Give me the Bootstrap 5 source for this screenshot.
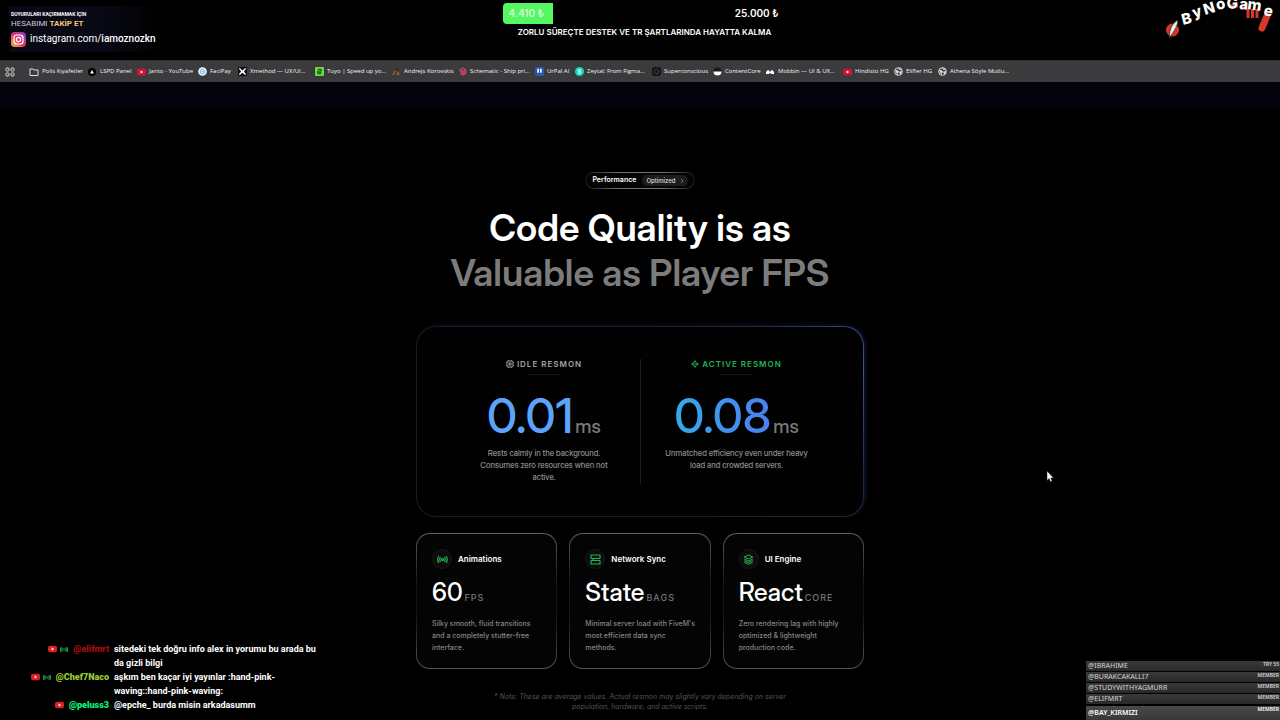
<!DOCTYPE html>
<html lang="tr" data-bs-theme="dark">
<head>
<meta charset="utf-8">
<meta name="viewport" content="width=device-width, initial-scale=1">
<title>Performance</title>
<link href="https://cdn.jsdelivr.net/npm/bootstrap@5.3.0/dist/css/bootstrap.min.css" rel="stylesheet">
<style>
body{background:#000;color:#fff;font-family:Inter,"Liberation Sans",sans-serif;min-height:100vh;overflow-x:hidden}
a{color:inherit;text-decoration:none}
svg{display:block;flex:none}
.stream-head{display:grid;grid-template-columns:1fr 284px 1fr;height:60px;padding-left:9px}
.promo{font-family:Roboto,sans-serif;width:152px;margin-top:6px;height:46px;padding:4px 0 0 2px;background:linear-gradient(90deg,#090916 60%,#000)}
.promo-top{font-size:5px;line-height:8px;font-weight:700}
.promo-mid{font-size:8px;line-height:11px;color:#c9c9d2}
.promo-mid b{color:#f5c56b}
.promo-link{font-size:10px;line-height:16px;margin-top:2px}
.promo-link b{font-weight:500}
.goal-row{height:21px;margin-top:3px;font-size:10px;font-weight:600}
.goal-fill{background:#55f763;border-radius:4px 0 0 4px;width:50px;padding-left:6px;color:#d5ffd8}
.goal-cap{font-size:8px;line-height:16px;font-weight:600;text-align:center;white-space:nowrap}
.bookmarks{display:grid;grid-template-columns:29px 58px 50px 61px 40px 77px 76px 68px 76px 40px 77px 61px 52px 78px 51px 44px 1fr;height:22px;background:#3b3b3e;border-top:1px solid #303033;align-items:center;font-family:"Open Sans",sans-serif;font-weight:500;font-size:6px;color:#f4f4f6;white-space:nowrap}
.bookmarks a{display:flex;align-items:center;gap:3px}
.apps-link{padding-left:5px}
.strip{height:26px;background:#04020c}
.perf{max-width:448px;padding-top:64px}
.pill{height:17px;border:1px solid transparent;border-radius:9px;background:linear-gradient(#050505,#050505) padding-box,linear-gradient(90deg,#1a1a1a,#707070 30%,#707070 70%,#1a1a1a) border-box;font-size:7px;font-weight:600;padding:0 6px;gap:6px}
.pill-in{background:#1c1c1e;border-radius:6px;height:11px;padding:0 4px;font-size:6px;font-weight:500;color:#ddd;gap:4px}
.headline,.figure-num,.unit,.desc,.value{font-family:"Inter Display",Inter,sans-serif}
.headline{font-size:37px;line-height:45px;font-weight:600;margin:16px 0 31px;white-space:nowrap}
.headline span{color:#7c7c7c}
.panel{border:1px solid transparent;border-radius:20px;padding:32px 31px;background:linear-gradient(#010102,#010102) padding-box,radial-gradient(circle at 100% 22%,#41558e,#222a44 22%,#1c1c1e 48%) border-box;box-shadow:2px -1px 4px -1px #101b3d}
.half{min-height:125px;text-align:center}
.half + .half{border-left:1px solid #1d1d1d}
.tag-line{font-size:8px;line-height:10px;font-weight:600;letter-spacing:1px;color:#a2a2a2;gap:3px}
.tag-line.live{color:#22b455}
.dash{width:32px;height:1px;background:#171717;margin:5px auto 16px}
.figure-num{font-size:48px;line-height:50px;font-weight:500;color:#5ca3fa}
.figure-num.grad{background:linear-gradient(90deg,#35a9ea,#4b7ff0);-webkit-background-clip:text;background-clip:text;color:transparent}
.unit{font-size:19px;line-height:24px;font-weight:500;color:#7a7a7a}
.figure{gap:2px}
.desc{font-size:8px;line-height:12px;color:#8c8c8c;font-weight:500;width:152px;margin:6px auto 0}
.tiles{display:grid;grid-template-columns:repeat(3,1fr);gap:12px;margin-top:16px}
.tile{border:1px solid transparent;border-radius:14px;padding:15px 14px 14px 15px;min-height:135px;background:linear-gradient(#040404,#040404) padding-box,linear-gradient(#5e5e5e,#151515 38%,#151515 62%,#555) border-box}
.tile h2{font-size:8px;line-height:20px;font-weight:600;margin:0}
.tile-head{gap:6px}
.disc{width:20px;height:20px;border-radius:50%;background:#0d0d0d;border:1px solid #171717;color:#22b455;display:flex;align-items:center;justify-content:center}
.value{font-size:25px;line-height:30px;font-weight:500;margin-top:8px;white-space:nowrap}
.value small{font-family:Inter,sans-serif;font-size:9px;letter-spacing:1px;color:#777;margin-left:2px}
.tile p{font-size:7px;line-height:12px;font-weight:500;color:#858585;margin:5px 0 0}
.note{font-size:7px;line-height:10px;font-style:italic;color:#555;text-align:center;width:300px;margin:23px auto 0}
.chat{position:absolute;left:0;bottom:8px;width:320px;font-family:Roboto,sans-serif;font-weight:700;font-size:9px;line-height:14px}
.chat-row{display:grid;grid-template-columns:109px 1fr;column-gap:5px}
.who{display:flex;justify-content:flex-end;align-items:center;gap:3px;height:14px}
.who b{margin-left:2px}
.members{position:absolute;right:0;bottom:0;width:194px;font-family:"Noto Sans",sans-serif;font-size:7px;color:#d5d5d5}
.members li{height:10px;margin-bottom:1px;padding:0 1px 0 2px;background:linear-gradient(#3a3a3a,#292929);display:flex;justify-content:space-between;line-height:10px}
.members small{font-size:5px;line-height:7px;font-weight:600}
.members li:last-child{height:14px;margin:2px 0 0;background:linear-gradient(#494949,#383838);line-height:14px;font-weight:600;color:#fff}
.pointer{position:absolute;left:1046px;top:470px}
</style>
</head>
<body class="position-relative">
<svg width="0" height="0" class="position-absolute">
<defs>
<symbol id="yt" viewBox="0 0 10 8"><rect y=".5" width="10" height="7" rx="2" fill="currentColor"/><path d="M4 2.4v3.2L6.8 4z" fill="#fff"/></symbol>
<symbol id="globe" viewBox="0 0 10 10"><circle cx="5" cy="5" r="4.3" fill="#3b3b3e" stroke="#ddd" stroke-width="1.1"/><path d="M1.2 3.5 4 4l1.4 1.6L4 6.4 3.8 8.8M5 1l.6 1.7L8.6 3M6 5.3l2.8-.2-1.6 3z" fill="#ddd" stroke="#ddd" stroke-width=".7"/></symbol>
<symbol id="wave" viewBox="0 0 10 8"><circle cx="5" cy="4" r="1.2" fill="none" stroke="currentColor"/><path d="M3 1.4Q1.4 4 3 6.6M7 1.4Q8.6 4 7 6.6M1.5.8Q-.4 4 1.5 7.2M8.5.8Q10.4 4 8.5 7.2" fill="none" stroke="currentColor" stroke-width="1.3"/></symbol>
</defs></svg>

<header class="stream-head">
  <div class="promo">
    <div class="promo-top">DUYURULARI KAÇIRMAMAK İÇİN</div>
    <div class="promo-mid">HESABIMI <b>TAKİP ET</b></div>
    <a href="#" class="promo-link d-flex align-items-center gap-1">
      <svg width="15" height="15" viewBox="0 0 15 15"><defs><linearGradient id="ig" x1="0" y1="1" x2="1" y2="0"><stop offset="0" stop-color="#fbbf45"/><stop offset=".45" stop-color="#e8385f"/><stop offset="1" stop-color="#7a35d8"/></linearGradient></defs><rect width="15" height="15" rx="4" fill="url(#ig)"/><rect x="3" y="3" width="9" height="9" rx="2.7" fill="none" stroke="#fff" stroke-width="1.2"/><circle cx="7.5" cy="7.5" r="2.1" fill="none" stroke="#fff" stroke-width="1.2"/><circle cx="10.2" cy="4.8" r=".6" fill="#fff"/></svg>
      <span>instagram.com/<b>iamoznozkn</b></span></a>
  </div>
  <div>
    <div class="goal-row d-flex justify-content-between align-items-center">
      <div class="goal-fill h-100 d-flex align-items-center">4.410 ₺</div><div class="pe-2">25.000 ₺</div>
    </div>
    <div class="goal-cap">ZORLU SÜREÇTE DESTEK VE TR ŞARTLARINDA HAYATTA KALMA</div>
  </div>
  <div class="d-flex justify-content-end">
    <svg width="120" height="44" viewBox="0 0 120 44" role="img" aria-label="ByNoGame">
      <circle cx="12.5" cy="30" r="6.5" fill="#d5382b"/><path d="M9 38 10 31Q12 23 18 20 18 27 9 38Z" fill="#e9eef0" stroke="#111" stroke-width=".6"/>
      <path d="M69 6h9M80 8h7M88 9v9M92.5 9v9M97 9v9" stroke="#d5382b" stroke-width="3" fill="none"/><path d="M107 16 102 28" stroke="#d5382b" stroke-width="7" stroke-linecap="round"/>
      <text x="23 34 45 57 67 79 87 103" y="25 18 15 10 9 9 9 15" rotate="-14 -18 -16 -12 -4 4 8 12" font-family="Inter,sans-serif" font-weight="800" font-size="15" fill="#fff">ByNoGame</text>
    </svg>
  </div>
</header>

<nav class="bookmarks" aria-label="Bookmarks">
  <a href="#" class="apps-link" aria-label="Apps"><svg width="10" height="10" viewBox="0 0 10 10" fill="none" stroke="#ddd"><rect x="1" y="1" width="3" height="3" rx=".8"/><rect x="6" y="1" width="3" height="3" rx=".8"/><rect x="1" y="6" width="3" height="3" rx=".8"/><rect x="6" y="6" width="3" height="3" rx=".8"/></svg></a>
  <a href="#"><svg width="10" height="10" viewBox="0 0 10 10"><path d="M1 2h3l1 1h4v5.500H1z" fill="none" stroke="#ddd"/></svg>Polis Kıyafetler</a>
  <a href="#"><svg width="10" height="10" viewBox="0 0 10 10"><circle cx="5" cy="5" r="4" fill="#000"/><path d="M5 3 7 6.500H3z" fill="#fff"/></svg>LSPD Panel</a>
  <a href="#"><svg width="9" height="8" color="#d90f35"><use href="#yt"/></svg>Janto - YouTube</a>
  <a href="#"><svg width="9" height="9" viewBox="0 0 10 10"><circle cx="5" cy="5" r="4.800" fill="#e8f6fa"/><circle cx="5" cy="5" r="2.500" fill="none" stroke="#57b5d8"/><path d="M3.500 5.200h3" stroke="#57b5d8"/></svg>FaciPay</a>
  <a href="#"><svg width="9" height="9" viewBox="0 0 10 10"><rect width="10" height="10" fill="#111"/><path d="m2 1 3 3 3-3 1 1-2.500 3L9 8 8 9 5 6.500 2 9 1 8l2.500-3L1 2z" fill="#fff"/></svg>Xmethod — UX/UI...</a>
  <a href="#"><svg width="9" height="9" viewBox="0 0 10 10"><rect width="10" height="10" rx="1.500" fill="#69dd3d"/><path d="M3 2.500h4v2H3v3h4M7 6H4" fill="none" stroke="#164b16" stroke-width="1.100"/></svg>Tuyo | Speed up yo...</a>
  <a href="#"><svg width="10" height="10" viewBox="0 0 10 10"><path d="m1 8 3-5 1 1-2 4zM5 8l2-4 2 4z" fill="#a35331"/><circle cx="6" cy="2.500" r="1" fill="#36211b"/></svg>Andrejs Korovskis</a>
  <a href="#"><svg width="8" height="9" viewBox="0 0 8 10"><path d="M4 1 7 3 4 5 1 3zM1 3v2l3 2 3-2v2L4 9 1 7" fill="none" stroke="#c84561" stroke-width="1.400"/></svg>Schematic - Ship pri...</a>
  <a href="#"><svg width="9" height="9" viewBox="0 0 10 10"><rect width="10" height="10" rx="2" fill="#285ab2"/><path d="M3.500 2v4.500M6.500 2v4.500" stroke="#fff" stroke-width="1.800"/></svg>UrPal AI</a>
  <a href="#"><svg width="9" height="9" viewBox="0 0 10 10"><circle cx="5" cy="5" r="5" fill="#12d8bd"/><path d="M7 3.300Q3 2 3.300 4.400L6.700 5.600Q7 8 3 6.800" fill="none" stroke="#fff" stroke-width="1.100"/></svg>Zeytal: From Figma...</a>
  <a href="#"><svg width="9" height="9" viewBox="0 0 10 10"><rect width="10" height="10" rx="3" fill="#151515"/><circle cx="5" cy="5" r="2.500" fill="none" stroke="#777" stroke-dasharray="1 .7"/></svg>Superconscious</a>
  <a href="#"><svg width="9" height="9" viewBox="0 0 10 10"><circle cx="5" cy="5" r="4.500" fill="#191919"/><path d="M.5 5h9a4.500 4.500 0 0 1-9 0" fill="#fff"/></svg>ContentCore</a>
  <a href="#"><svg width="10" height="8" viewBox="0 0 10 8"><path d="M1 6V4.500Q1.300 2 3.500 2L5 4 6.500 2Q8.800 2 9 4.500V6H6.500L5 5 3.500 6z" fill="#fff"/></svg>Mobbin — UI &amp; UX...</a>
  <a href="#"><svg width="9" height="8" color="#d90f35"><use href="#yt"/></svg>Hindisto HG</a>
  <a href="#"><svg width="9" height="9"><use href="#globe"/></svg>Elifler HG</a>
  <a href="#"><svg width="9" height="9"><use href="#globe"/></svg>Athena Söyle Mutlu...</a>
</nav>
<div class="strip"></div>

<main class="perf container-fluid px-0 mx-auto">
  <div class="d-flex justify-content-center">
    <a href="#" class="pill d-flex align-items-center">Performance <span class="pill-in d-flex align-items-center">Optimized <svg width="4" height="6" viewBox="0 0 4 6"><path d="m1 1 2 2-2 2" fill="none" stroke="#888" stroke-width=".8"/></svg></span></a>
  </div>
  <h1 class="headline d-flex flex-column align-items-center">Code Quality is as<span>Valuable as Player FPS</span></h1>

  <section class="panel row g-0">
    <div class="half col-6">
      <div class="tag-line d-flex justify-content-center align-items-center"><svg width="8" height="8" viewBox="0 0 8 8" fill="none" stroke="currentColor"><rect x="1" y="1" width="6" height="6" rx="1"/><rect x="3" y="3" width="2" height="2"/><path d="M2.500 0v1M5.500 0v1M2.500 7v1M5.500 7v1M0 2.500h1M0 5.500h1M7 2.500h1M7 5.500h1" stroke-width=".7"/></svg>IDLE RESMON</div>
      <div class="dash"></div>
      <div class="figure d-flex justify-content-center align-items-baseline m-0"><span class="figure-num">0.01</span><span class="unit">ms</span></div>
      <p class="desc">Rests calmly in the background. Consumes zero resources when not active.</p>
    </div>
    <div class="half col-6">
      <div class="tag-line live d-flex justify-content-center align-items-center"><svg width="8" height="8" viewBox="0 0 8 8" fill="none" stroke="currentColor" stroke-width=".9"><path d="M3 2.500 4 .6l1 1.900L7.400 4 5 5.500 4 7.400 3 5.500.6 4zM3 2.500v3M5 2.500v3"/></svg>ACTIVE RESMON</div>
      <div class="dash"></div>
      <div class="figure d-flex justify-content-center align-items-baseline m-0"><span class="figure-num grad">0.08</span><span class="unit">ms</span></div>
      <p class="desc">Unmatched efficiency even under heavy load and crowded servers.</p>
    </div>
  </section>

  <section class="tiles">
    <article class="tile">
      <div class="tile-head d-flex"><span class="disc"><svg width="11" height="9" viewBox="0 0 11 9" fill="none" stroke="currentColor" stroke-width="1.200"><circle cx="5.500" cy="4.500" r="1"/><path d="M3.500 2.200Q2 4.500 3.500 6.800M7.500 2.200Q9 4.500 7.500 6.800M1.800 1Q-.4 4.500 1.800 8M9.200 1Q11.400 4.500 9.200 8"/></svg></span><h2>Animations</h2></div>
      <div class="value">60<small>FPS</small></div>
      <p>Silky smooth, fluid transitions and a completely stutter-free interface.</p>
    </article>
    <article class="tile">
      <div class="tile-head d-flex"><span class="disc"><svg width="11" height="11" viewBox="0 0 11 11" fill="none" stroke="currentColor" stroke-width="1.200"><rect x="1" y="1" width="9" height="3.500" rx=".6"/><rect x="1" y="6.500" width="9" height="3.500" rx=".6"/><path d="M3 4.500v2"/></svg></span><h2>Network Sync</h2></div>
      <div class="value">State<small>BAGS</small></div>
      <p>Minimal server load with FiveM's most efficient data sync methods.</p>
    </article>
    <article class="tile">
      <div class="tile-head d-flex"><span class="disc"><svg width="11" height="11" viewBox="0 0 11 11" fill="none" stroke="currentColor" stroke-linejoin="round"><path d="m5.500 1 4.300 2-4.300 2-4.300-2zM1.200 5l4.300 2 4.300-2M1.200 6.600l4.300 2 4.300-2M1.200 8.200l4.300 2 4.300-2"/></svg></span><h2>UI Engine</h2></div>
      <div class="value">React<small>CORE</small></div>
      <p>Zero rendering lag with highly optimized &amp; lightweight production code.</p>
    </article>
  </section>
  <p class="note">* Note: These are average values. Actual resmon may slightly vary depending on server population, hardware, and active scripts.</p>
</main>

<aside class="chat" aria-label="Chat">
  <div class="chat-row"><span class="who"><svg width="9" height="8" color="#dc1f1f"><use href="#yt"/></svg><svg width="8" height="7" color="#1d9d52"><use href="#wave"/></svg><b style="color:#a80d0d">@elifmrt</b></span><span>sitedeki tek doğru info alex in yorumu bu arada bu da gizli bilgi</span></div>
  <div class="chat-row"><span class="who"><svg width="9" height="8" color="#dc1f1f"><use href="#yt"/></svg><svg width="8" height="7" color="#1d9d52"><use href="#wave"/></svg><b style="color:#9acd32">@Chef7Naco</b></span><span>aşkım ben kaçar iyi yayınlar :hand-pink-<br>waving::hand-pink-waving:</span></div>
  <div class="chat-row"><span class="who"><svg width="9" height="8" color="#dc1f1f"><use href="#yt"/></svg><b style="color:#0cf57d">@peluss3</b></span><span>@epche_ burda misin arkadasumm</span></div>
</aside>

<ul class="members list-unstyled mb-0">
  <li>@IBRAHIME<small>TRY 55</small></li>
  <li>@BURAKCAKALLI7<small>MEMBER</small></li>
  <li>@STUDYWITHYAGMURR<small>MEMBER</small></li>
  <li>@ELIFMRT<small>MEMBER</small></li>
  <li>@BAY_KIRMIZI<small>MEMBER</small></li>
</ul>
<svg class="pointer" width="8" height="13" viewBox="0 0 8 13"><path d="M1 1v9.500l2-2 1.500 3.300 1.600-.7L4.700 8H7.500z" fill="#fff" stroke="#222" stroke-width=".5"/></svg>
<script src="https://cdn.jsdelivr.net/npm/bootstrap@5.3.0/dist/js/bootstrap.bundle.min.js"></script>
</body>
</html>
